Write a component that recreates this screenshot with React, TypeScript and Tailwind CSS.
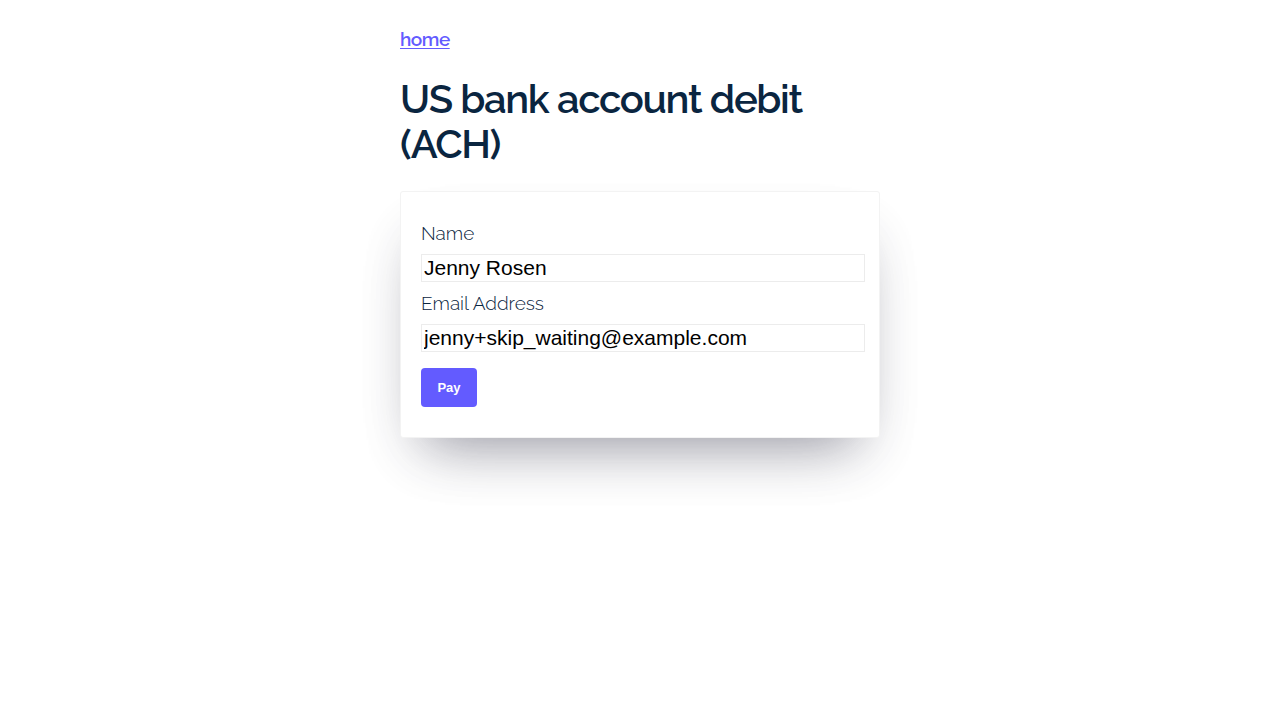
export default function App() {
  return (
    <div className="min-h-screen bg-white font-['Raleway','Lato','Open_Sans',sans-serif]">
      <div className="w-[480px] mx-auto pt-[27px]">
        <a
          href="#"
          className="block w-fit text-[19px] leading-[24px] font-semibold tracking-[-0.5px] text-[#635bff] underline underline-offset-2"
        >
          home
        </a>

        <h1 className="mt-[25px] text-[40px] leading-[45px] font-semibold tracking-[-1.35px] text-[#0a2540]">
          US bank account debit
          <br />
          (ACH)
        </h1>

        <form
          className="mt-[25px] p-[20px] bg-white border border-[#f3f3f3] rounded-[3px] shadow-[0_30px_50px_-20px_rgba(50,50,93,0.25),0_30px_60px_-30px_rgba(0,0,0,0.3)]"
          onSubmit={(e) => e.preventDefault()}
        >
          <label className="block mt-[10px] text-[19px] leading-[23px] font-light text-[#0a2540]">
            Name
          </label>
          <input
            defaultValue="Jenny Rosen"
            className="block mt-[9px] w-[444px] h-[28px] px-[2px] border border-[#ececec] font-['Liberation_Sans',Arial,sans-serif] text-[21px] leading-[24px] text-black outline-none"
          />
          <label className="block mt-[10px] text-[19px] leading-[23px] font-light text-[#0a2540]">
            Email Address
          </label>
          <input
            defaultValue="jenny+skip_waiting@example.com"
            className="block mt-[9px] w-[444px] h-[28px] px-[2px] border border-[#ececec] font-['Liberation_Sans',Arial,sans-serif] text-[21px] leading-[24px] text-black outline-none"
          />
          <button
            type="submit"
            className="block mt-[16px] mb-[10px] w-[56px] h-[39px] rounded-[4px] bg-[#635bff] text-white text-[13px] font-bold font-['Liberation_Sans',Arial,sans-serif]"
          >
            Pay
          </button>
        </form>
      </div>
    </div>
  );
}
